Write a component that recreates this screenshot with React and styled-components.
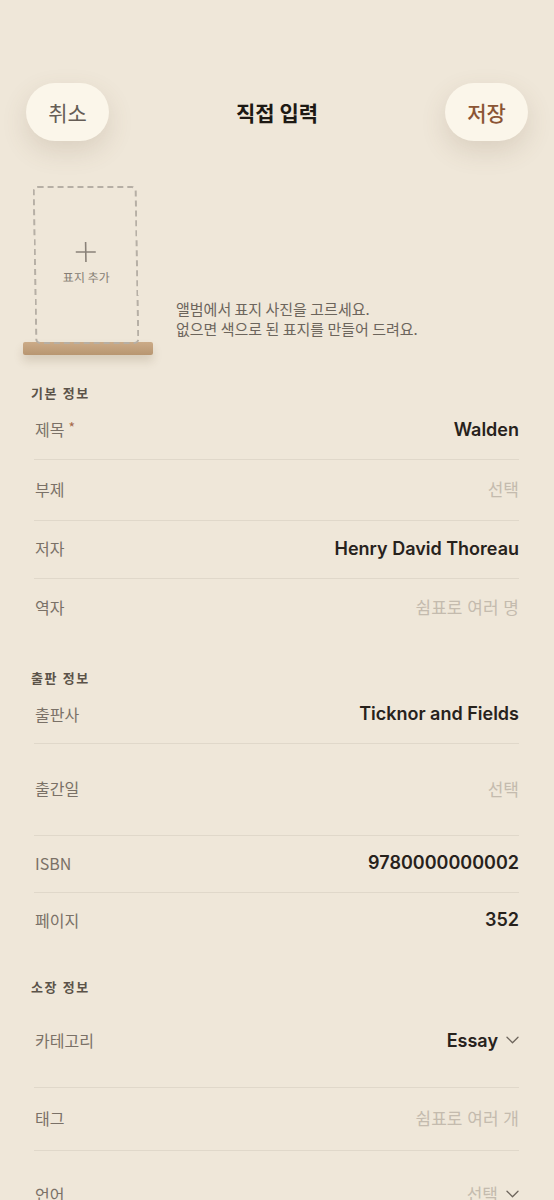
import styled, { createGlobalStyle } from 'styled-components';

const GlobalStyle = createGlobalStyle`
  body {
    margin: 0;
    background: #efe7d9;
    font-family: Inter, 'Noto Sans CJK KR', sans-serif;
    -webkit-font-smoothing: antialiased;
  }
`;

const Page = styled.div`
  width: 554px;
  min-height: 1200px;
  background: #efe7d9;
  overflow: hidden;
`;

const Header = styled.header`
  display: flex;
  align-items: center;
  justify-content: space-between;
  padding: 83px 26px 0;
`;

const PillButton = styled.button`
  width: 83px;
  height: 58px;
  border: none;
  border-radius: 29px;
  background: #fbf6ea;
  box-shadow: 0 10px 26px rgba(110, 90, 60, 0.16);
  font-family: 'Noto Sans CJK KR', sans-serif;
  font-size: 21px;
  font-weight: ${(p) => (p.$primary ? 500 : 400)};
  color: ${(p) => (p.$primary ? '#8b5535' : '#655d55')};
  padding: 0;
`;

const Title = styled.h1`
  margin: 0;
  font-family: 'Noto Sans CJK KR', sans-serif;
  font-size: 21px;
  font-weight: 700;
  color: #1d1914;
`;

const CoverSection = styled.section`
  display: flex;
  align-items: flex-end;
  gap: 23px;
  padding: 45px 0 0 23px;
`;

const CoverStand = styled.div`
  display: flex;
  flex-direction: column;
  width: 130px;
`;

const CoverFrame = styled.div`
  width: 100px;
  height: 150px;
  margin-left: 11px;
  border: 2px dashed #b6afa5;
  border-radius: 5px;
  display: flex;
  flex-direction: column;
  align-items: center;
  justify-content: center;
  gap: 5px;
  padding-bottom: 4px;
  box-sizing: content-box;
  transform: skewX(1deg);
`;

const AddLabel = styled.span`
  font-family: 'Noto Sans CJK KR', sans-serif;
  font-size: 12px;
  color: #857d74;
`;

const Shelf = styled.div`
  width: 130px;
  height: 13px;
  margin-top: -2px;
  border-radius: 2px;
  background: linear-gradient(180deg, #cbab88 0%, #b89671 100%);
  box-shadow: 0 6px 10px rgba(100, 75, 45, 0.18);
`;

const CoverHint = styled.p`
  margin: 0 0 16px;
  font-family: 'Noto Sans CJK KR', sans-serif;
  font-size: 15px;
  line-height: 20px;
  color: #6c655c;
`;

const SectionTitle = styled.h2`
  margin: ${(p) => p.$top}px 0 0 31px;
  height: 18px;
  font-family: 'Noto Sans CJK KR', sans-serif;
  font-size: 13px;
  line-height: 18px;
  font-weight: 700;
  letter-spacing: 1.6px;
  color: #5b5349;
`;

const List = styled.div`
  padding: 0 35px 0 34px;
`;

const Row = styled.div`
  display: flex;
  align-items: center;
  justify-content: space-between;
  box-sizing: border-box;
  height: ${(p) => p.$h}px;
  padding-bottom: 3px;
  border-bottom: ${(p) => (p.$last ? 'none' : '1px solid #e0d8ca')};
`;

const Label = styled.span`
  display: flex;
  align-items: center;
  gap: 4px;
  padding-left: 1px;
  font-family: 'Noto Sans CJK KR', sans-serif;
  font-size: 16px;
  color: #7a7167;
`;

const Required = styled.span`
  color: #a5694a;
  font-size: 14px;
  margin-top: -4px;
`;

const Value = styled.span`
  display: flex;
  align-items: center;
  gap: 8px;
  font-size: ${(p) => (p.$placeholder ? 17 : 18)}px;
  font-weight: ${(p) => (p.$placeholder ? 400 : 600)};
  color: ${(p) => (p.$placeholder ? '#c4bbae' : '#27221c')};
`;

const Chevron = () => (
  <svg width="13" height="8" viewBox="0 0 13 8" fill="none">
    <path d="M1 1.2l5.5 5.5 5.5-5.5" stroke="#6d655c" strokeWidth="1.3" strokeLinecap="round" strokeLinejoin="round" />
  </svg>
);

const Plus = () => (
  <svg width="22" height="22" viewBox="0 0 22 22" fill="none">
    <path d="M11 1v20M1 11h20" stroke="#8a8279" strokeWidth="1.6" />
  </svg>
);

const sections = [
  {
    title: '기본 정보',
    top: 29,
    rows: [
      { label: '제목', required: true, value: 'Walden', h: 58 },
      { label: '부제', placeholder: '선택', h: 61 },
      { label: '저자', value: 'Henry David Thoreau', h: 58 },
      { label: '역자', placeholder: '쉼표로 여러 명', h: 58 },
    ],
  },
  {
    title: '출판 정보',
    top: 32,
    rows: [
      { label: '출판사', value: 'Ticknor and Fields', h: 57 },
      { label: '출간일', placeholder: '선택', h: 92 },
      { label: 'ISBN', value: '9780000000002', h: 57 },
      { label: '페이지', value: '352', h: 56 },
    ],
  },
  {
    title: '소장 정보',
    top: 29,
    rows: [
      { label: '카테고리', value: 'Essay', chevron: true, h: 92 },
      { label: '태그', placeholder: '쉼표로 여러 개', h: 63 },
      { label: '언어', placeholder: '선택', chevron: true, h: 88 },
    ],
  },
];

function App() {
  return (
    <Page>
      <GlobalStyle />
      <Header>
        <PillButton>취소</PillButton>
        <Title>직접 입력</Title>
        <PillButton $primary>저장</PillButton>
      </Header>

      <CoverSection>
        <CoverStand>
          <CoverFrame>
            <Plus />
            <AddLabel>표지 추가</AddLabel>
          </CoverFrame>
          <Shelf />
        </CoverStand>
        <CoverHint>
          앨범에서 표지 사진을 고르세요.
          <br />
          없으면 색으로 된 표지를 만들어 드려요.
        </CoverHint>
      </CoverSection>

      {sections.map((section) => (
        <div key={section.title}>
          <SectionTitle $top={section.top}>{section.title}</SectionTitle>
          <List>
            {section.rows.map((row, i) => (
              <Row key={row.label} $h={row.h} $last={i === section.rows.length - 1}>
                <Label>
                  {row.label}
                  {row.required && <Required>*</Required>}
                </Label>
                <Value $placeholder={!row.value}>
                  {row.value || row.placeholder}
                  {row.chevron && <Chevron />}
                </Value>
              </Row>
            ))}
          </List>
        </div>
      ))}
    </Page>
  );
}

export default App;
